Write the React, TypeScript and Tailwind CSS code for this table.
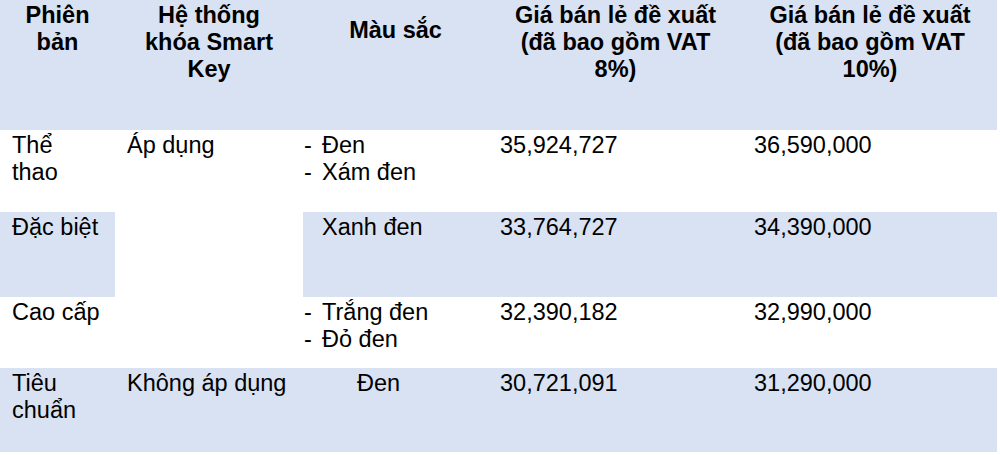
import React from 'react';

type Row = {
  edition: React.ReactNode;
  colors: React.ReactNode;
  vat8: string;
  vat10: string;
  shaded: boolean;
};

function DashList({ items }: { items: string[] }) {
  return (
    <div className="flex flex-col">
      {items.map((item) => (
        <div key={item} className="flex">
          <span className="w-[18px] shrink-0">-</span>
          <span>{item}</span>
        </div>
      ))}
    </div>
  );
}

const rows: Row[] = [
  {
    edition: (
      <>
        Thể
        <br />
        thao
      </>
    ),
    colors: <DashList items={['Đen', 'Xám đen']} />,
    vat8: '35,924,727',
    vat10: '36,590,000',
    shaded: false,
  },
  {
    edition: 'Đặc biệt',
    colors: <div className="pl-[18px]">Xanh đen</div>,
    vat8: '33,764,727',
    vat10: '34,390,000',
    shaded: true,
  },
  {
    edition: 'Cao cấp',
    colors: <DashList items={['Trắng đen', 'Đỏ đen']} />,
    vat8: '32,390,182',
    vat10: '32,990,000',
    shaded: false,
  },
];

export default function App() {
  const head = 'bg-[#d9e2f3] pt-[2px] text-center font-bold';

  return (
    <div className="h-[455px] w-[1000px] bg-white font-['Liberation_Sans',Arial,sans-serif] text-[23.5px] leading-[27px] text-black">
      <div className="grid w-[997px] grid-cols-[115px_188px_185px_255px_254px] grid-rows-[130px_82px_85px_71px_84px]">
        {/* header */}
        <div className={head}>
          Phiên
          <br />
          bản
        </div>
        <div className={head}>
          Hệ thống
          <br />
          khóa Smart
          <br />
          Key
        </div>
        <div className={`${head} pt-[17px]`}>Màu sắc</div>
        <div className={head}>
          Giá bán lẻ đề xuất
          <br />
          (đã bao gồm VAT
          <br />
          8%)
        </div>
        <div className={head}>
          Giá bán lẻ đề xuất
          <br />
          (đã bao gồm VAT
          <br />
          10%)
        </div>

        {/* rows sharing the merged "Áp dụng" cell */}
        {rows.map((r, i) => {
          const bg = r.shaded ? 'bg-[#d9e2f3]' : 'bg-white';
          return (
            <React.Fragment key={r.vat8}>
              <div className={`${bg} pl-3 pt-[2px]`}>{r.edition}</div>
              {i === 0 && <div className="row-span-3 bg-white pl-3 pt-[2px]">Áp dụng</div>}
              <div className={`${bg} pl-[1px] pt-[2px]`}>{r.colors}</div>
              <div className={`${bg} pl-[12px] pt-[2px]`}>{r.vat8}</div>
              <div className={`${bg} pl-[11px] pt-[2px]`}>{r.vat10}</div>
            </React.Fragment>
          );
        })}

        {/* last row */}
        <div className="bg-[#d9e2f3] pl-3 pt-[2px]">
          Tiêu
          <br />
          chuẩn
        </div>
        <div className="bg-[#d9e2f3] pl-3 pt-[2px]">Không áp dụng</div>
        <div className="bg-[#d9e2f3] pl-[54px] pt-[2px]">Đen</div>
        <div className="bg-[#d9e2f3] pl-[12px] pt-[2px]">30,721,091</div>
        <div className="bg-[#d9e2f3] pl-[11px] pt-[2px]">31,290,000</div>
      </div>
    </div>
  );
}
